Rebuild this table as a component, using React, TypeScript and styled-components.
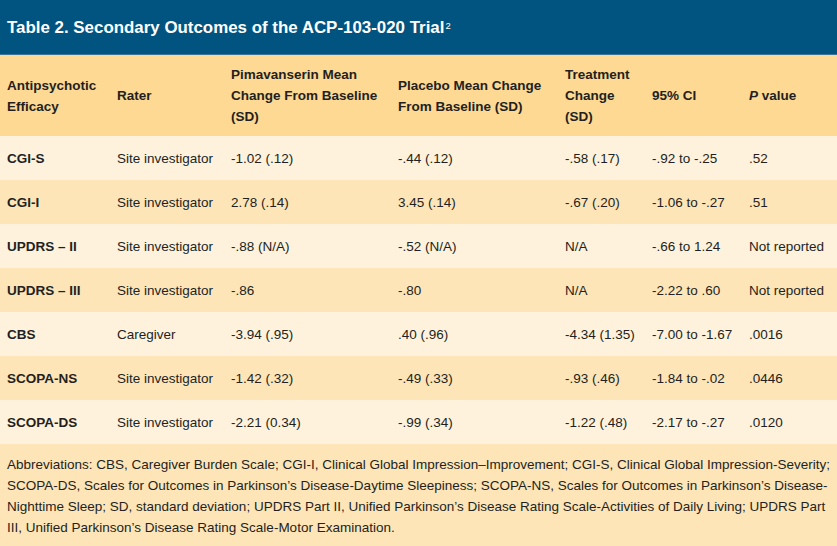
import styled, { createGlobalStyle } from "styled-components";

const GlobalStyle = createGlobalStyle`
    html, body {
        margin: 0;
        padding: 0;
        background: #fef2dc;
    }
    body {
        font-family: "Liberation Sans", Arial, sans-serif;
        color: #231f20;
    }
`;

const columns = "110px 114px 167px 167px 87px 97px 1fr";

const Wrapper = styled.div`
    width: 837px;
    height: 546px;
    display: flex;
    flex-direction: column;
    overflow: hidden;
`;

const TitleBar = styled.div`
    height: 55px;
    background: #01547f;
    color: #ffffff;
    display: flex;
    align-items: center;
    padding: 1px 7px 0 7px;
    font-size: 16.9px;
    font-weight: 700;
    border-bottom: 1px solid #3d7596;
    box-sizing: border-box;
`;

const Sup = styled.span`
    font-size: 9.5px;
    font-weight: 400;
    margin-left: 1px;
    align-self: flex-start;
    margin-top: 19px;
`;

const Row = styled.div<{ $bg: string; $height: number }>`
    display: grid;
    grid-template-columns: ${columns};
    align-items: center;
    padding-left: 7px;
    height: ${({ $height }) => $height}px;
    background: ${({ $bg }) => $bg};
    font-size: 13.5px;
`;

const HeadCell = styled.div`
    font-weight: 700;
    font-size: 13.5px;
    line-height: 21px;
`;

const Cell = styled.div<{ $bold?: boolean }>`
    font-weight: ${({ $bold }) => ($bold ? 700 : 400)};
    white-space: nowrap;
`;

const Footer = styled.div`
    flex: 1;
    background: #fde5b8;
    padding: 10px 0 0 7px;
    font-size: 13.5px;
    line-height: 21px;
    white-space: nowrap;
`;

const rows = [
    ["CGI-S", "Site investigator", "-1.02 (.12)", "-.44 (.12)", "-.58 (.17)", "-.92 to -.25", ".52"],
    ["CGI-I", "Site investigator", "2.78 (.14)", "3.45 (.14)", "-.67 (.20)", "-1.06 to -.27", ".51"],
    ["UPDRS \u2013 II", "Site investigator", "-.88 (N/A)", "-.52 (N/A)", "N/A", "-.66 to 1.24", "Not reported"],
    ["UPDRS \u2013 III", "Site investigator", "-.86", "-.80", "N/A", "-2.22 to .60", "Not reported"],
    ["CBS", "Caregiver", "-3.94 (.95)", ".40 (.96)", "-4.34 (1.35)", "-7.00 to -1.67", ".0016"],
    ["SCOPA-NS", "Site investigator", "-1.42 (.32)", "-.49 (.33)", "-.93 (.46)", "-1.84 to -.02", ".0446"],
    ["SCOPA-DS", "Site investigator", "-2.21 (0.34)", "-.99 (.34)", "-1.22 (.48)", "-2.17 to -.27", ".0120"],
];

export default function App() {
    return (
        <>
            <GlobalStyle />
            <Wrapper>
                <TitleBar>
                    Table 2. Secondary Outcomes of the ACP-103-020 Trial<Sup>2</Sup>
                </TitleBar>
                <Row $bg="#fdd994" $height={81}>
                    <HeadCell>Antipsychotic<br />Efficacy</HeadCell>
                    <HeadCell>Rater</HeadCell>
                    <HeadCell>Pimavanserin Mean<br />Change From Baseline<br />(SD)</HeadCell>
                    <HeadCell>Placebo Mean Change<br />From Baseline (SD)</HeadCell>
                    <HeadCell>Treatment<br />Change<br />(SD)</HeadCell>
                    <HeadCell>95% CI</HeadCell>
                    <HeadCell><i>P</i> value</HeadCell>
                </Row>
                {rows.map((r, i) => (
                    <Row key={r[0]} $bg={i % 2 === 0 ? "#fef2dc" : "#fde5b8"} $height={44}>
                        {r.map((c, j) => (
                            <Cell key={j} $bold={j === 0}>{c}</Cell>
                        ))}
                    </Row>
                ))}
                <Footer>
                    Abbreviations: CBS, Caregiver Burden Scale; CGI-I, Clinical Global Impression–Improvement; CGI-S, Clinical Global Impression-Severity;<br />
                    SCOPA-DS, Scales for Outcomes in Parkinson’s Disease-Daytime Sleepiness; SCOPA-NS, Scales for Outcomes in Parkinson’s Disease-<br />
                    Nighttime Sleep; SD, standard deviation; UPDRS Part II, Unified Parkinson’s Disease Rating Scale-Activities of Daily Living; UPDRS Part<br />
                    III, Unified Parkinson’s Disease Rating Scale-Motor Examination.
                </Footer>
            </Wrapper>
        </>
    );
}
